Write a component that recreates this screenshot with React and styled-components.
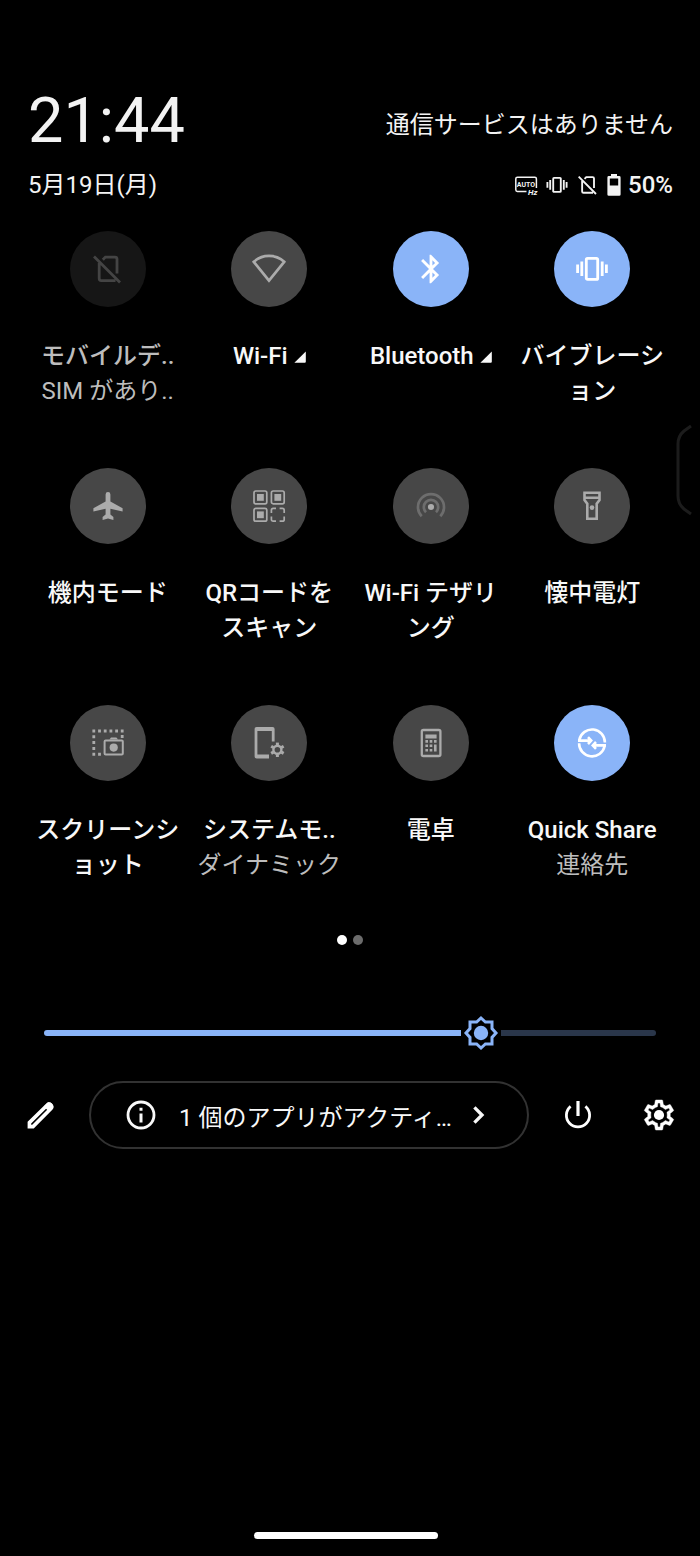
import React, {useState} from "react";

import styled, {createGlobalStyle} from 'styled-components';

import {MdBluetooth} from "react-icons/md";

const GlobalStyle = createGlobalStyle`
    * {
        box-sizing: border-box;
    }
    body {
        margin: 0;
        background: #000;
        color: #f3f3f3;
        font-family: Roboto, "Noto Sans CJK JP", sans-serif;
        font-size: 24px;
    }
    button {
        border: 0;
        padding: 0;
        background: none;
        color: inherit;
        font: inherit;
        cursor: pointer;
    }
    svg {
        display: block;
        flex-shrink: 0;
    }
`

const Page = styled.div`
    position: relative;
    display: flex;
    flex-direction: column;
    min-height: 100vh;
    padding-top: 89px;
`

const Header = styled.header`
    display: flex;
    flex-direction: column;
    gap: 16px;
    padding: 0 27px 0 28px;
`

const HeaderRow = styled.div`
    display: flex;
    justify-content: space-between;
    align-items: flex-end;
    line-height: 32px;
`

const Clock = styled.time`
    font-size: 63px;
    line-height: 64px;
`

const Carrier = styled.span`
    line-height: 56px;
`

const Status = styled.div`
    display: flex;
    align-items: center;
    gap: 7px;
    font-weight: 500;
`

const Tiles = styled.main`
    display: grid;
    grid-template-columns: repeat(4, 1fr);
    grid-auto-rows: minmax(178px, auto);
    row-gap: 59px;
    margin-top: 30px;
    padding: 0 27px;
`

const TileButton = styled.button`
    display: flex;
    flex-direction: column;
    align-items: center;
    justify-content: flex-start;
    gap: 32px;
    color: ${(props) => props.$state === "disabled" ? "#bdbdbd" : "#f8f8f8"};
`

const tileColors = {
    on: ["#8ab4f8", "#fff"],
    off: ["#474747", "#ababab"],
    disabled: ["#161616", "#444"],
}

const Circle = styled.span`
    display: flex;
    align-items: center;
    justify-content: center;
    width: 76px;
    height: 76px;
    border-radius: 50%;
    background: ${(props) => tileColors[props.$state][0]};
    color: ${(props) => tileColors[props.$state][1]};
`

const TileText = styled.span`
    display: flex;
    flex-direction: column;
    align-items: center;
    width: 148px;
    line-height: 35px;
`

const TileName = styled.span`
    display: flex;
    align-items: center;
    gap: 6px;
    font-weight: 500;
    line-break: anywhere;
`

const TileDetail = styled.span`
    color: #bdbdbd;
    white-space: nowrap;
`

const Dots = styled.nav`
    display: flex;
    justify-content: center;
    gap: 6px;
    margin-top: 52px;
`

const Dot = styled.button`
    width: 10px;
    height: 10px;
    border-radius: 50%;
    background: ${(props) => props.$current ? "#fff" : "#6c6c6c"};
`

const thumb = `<svg xmlns='http://www.w3.org/2000/svg' viewBox='-20 -20 40 40'><path d='M0-15L4.4-11H11V-4.4L15 0 11 4.4V11H4.4L0 15-4.4 11H-11V4.4L-15 0-11-4.4V-11H-4.4Z' fill='none' stroke='#8ab4f8' stroke-width='3'/><circle r='7.2' fill='#8ab4f8'/></svg>`

const SliderWrap = styled.div`
    display: flex;
    margin-top: 68px;
    padding: 0 44px;
`

const Slider = styled.input`
    appearance: none;
    width: 100%;
    height: 40px;
    margin: 0;
    background: none;

    &::-webkit-slider-runnable-track {
        height: 6px;
        border-radius: 3px;
        background: linear-gradient(to right, #8ab4f8 var(--level), #2a364a var(--level));
    }
    &::-webkit-slider-thumb {
        appearance: none;
        width: 40px;
        height: 40px;
        margin-top: -17px;
        background: #000 url("data:image/svg+xml,${encodeURIComponent(thumb).replace(/'/g, "%27")}") center / 40px no-repeat;
    }
`

const Actions = styled.div`
    display: flex;
    align-items: center;
    gap: 33px;
    margin-top: 28px;
    padding: 0 25px 0 24px;
    color: #fff;
`

const IconButton = styled.button`
    display: flex;
    align-items: center;
    justify-content: center;
    width: 32px;
    height: 40px;
`

const ActionGroup = styled.div`
    display: flex;
    gap: 49px;
`

const ActiveApps = styled.button`
    display: flex;
    flex: 1;
    align-items: center;
    min-width: 0;
    height: 68px;
    padding: 0 30px 0 32px;
    border: 2px solid #323232;
    border-radius: 34px;
    color: #f8f8f8;
`

const ActiveText = styled.span`
    flex: 1;
    min-width: 0;
    margin-left: 20px;
    overflow: hidden;
    text-align: left;
    text-overflow: ellipsis;
    white-space: nowrap;
`

const EdgeHandle = styled.svg`
    position: absolute;
    top: 424px;
    right: 8px;
`

const Footer = styled.footer`
    display: flex;
    justify-content: center;
    margin-top: auto;
    padding: 32px 8px 17px 0;
`

const HomeBar = styled.button`
    width: 184px;
    height: 7px;
    border-radius: 4px;
    background: #fff;
`

// every icon is drawn around 0,0 on a 36 unit canvas
const Icon = ({size = 36, children, ...rest}) => (
    <svg width={size} height={size} viewBox="-18 -18 36 36" fill="none" stroke="currentColor"
         strokeWidth="2.4" aria-hidden="true" {...rest}>
        {children}
    </svg>
)

const NoSimIcon = (props) => (
    <Icon strokeWidth="2.8" {...props}>
        <path d="M-14-12.5L12 13.5M-8.8-6V9.6Q-8.8 11.6-6.8 11.6H7.5M-5.2-9.2L-2.6-11.9H7Q9-11.9 9-9.9V4.6"/>
    </Icon>
)

const WifiIcon = () => (
    <Icon>
        <path d="M0 11.6L-15.2-7.2A22.6 22.6 0 0 1 15.2-7.2Z" strokeWidth="2.7"/>
    </Icon>
)

const VibrateIcon = (props) => (
    <Icon {...props}>
        <rect x="-5.7" y="-10.6" width="11.4" height="21" rx="1.2" strokeWidth="2.8"/>
        <path d="M-10.2-7.6V7M10.2-7.6V7M-14.4-4.4V4M14.4-4.4V4" strokeWidth="2.8"/>
    </Icon>
)

const PlaneIcon = () => (
    <Icon>
        <path stroke="none" fill="currentColor"
              d="M-2.4-11.6a2.4 2.4 0 0 1 4.8 0V-4.6L14.6 2.2V5.4L2.4 2.8V8.4L5.4 11V13.9L0 12.6-5.4 13.9V11L-2.4 8.4V2.8L-14.6 5.4V2.2L-2.4-4.6Z"/>
    </Icon>
)

const QrIcon = () => (
    <Icon strokeWidth="1.7">
        {[[-15, -15], [2.4, -15], [-15, 2.4]].map(([x, y]) => (
            <g key={`${x} ${y}`}>
                <rect x={x} y={y} width="12.8" height="12.8" rx="1.8"/>
                <rect x={x + 3} y={y + 3} width="6.8" height="6.8" fill="currentColor" stroke="none"/>
            </g>
        ))}
        <path d="M2.4 7V4.2Q2.4 2.4 4.2 2.4H7M10.6 2.4H13.4Q15.2 2.4 15.2 4.2V7M15.2 10.6V13.4Q15.2 15.2 13.4 15.2H10.6M7 15.2H4.2Q2.4 15.2 2.4 13.4V10.6"/>
    </Icon>
)

const HotspotIcon = () => (
    <Icon>
        <g stroke="#6d6d6d" strokeWidth="2.7">
            <path d="M-9.3 10.2A13 13 0 1 1 9.3 10.2"/>
            <path d="M-5 6.2A7.2 7.2 0 1 1 5 6.2"/>
        </g>
        <circle cy="1" r="3.1" fill="currentColor" stroke="none"/>
    </Icon>
)

const TorchIcon = () => (
    <Icon strokeWidth="2.6">
        <path d="M-7.5-13.3H7.5V-6L4.7-2.2V12.7H-4.7V-2.2L-7.5-6ZM-7.5-8.3H7.5"/>
        <circle cy="1.6" r="2.3" fill="currentColor" stroke="none"/>
    </Icon>
)

const ScreenshotIcon = () => (
    <Icon>
        <path strokeWidth="3" d="M-15.6-11.9H-12.8M-9.9-11.9H-7.1M-4.2-11.9H-1.4M1.5-11.9H4.3M7.2-11.9H10M12.8-11.9H15.6M12.8-6.6H15.6M-15.6-6.2H-12.8M-15.6-.4H-12.8M-15.6 5.4H-12.8M-15.6 11.2H-12.8M-9.9 11.2H-7.1"/>
        <rect x="-3.4" y="-2.6" width="18.2" height="14.2" rx="1" strokeWidth="2"/>
        <path d="M1.4-3.4L3-5.4H8.4L10-3.4Z" fill="currentColor" stroke="none"/>
        <circle cx="5.7" cy="4.6" r="4.1" fill="currentColor" stroke="none"/>
    </Icon>
)

const SystemIcon = () => (
    <Icon>
        <path stroke="none" fill="currentColor"
              d="M5.6-1.6V-14Q5.6-16 3.6-16H-12.4Q-14.4-16-14.4-14V13.4Q-14.4 15.4-12.4 15.4H0V11.4H-11.6V-12H2.8V-1.6Z"/>
        <g transform="translate(8.4 6.8)">
            <circle r="4" strokeWidth="2.4"/>
            {[0, 60, 120, 180, 240, 300].map((deg) => (
                <path key={deg} d="M0-4.6V-7.2" strokeWidth="3" transform={`rotate(${deg})`}/>
            ))}
        </g>
    </Icon>
)

const CalculatorIcon = () => (
    <Icon>
        <rect x="-9.2" y="-13" width="18.6" height="26" rx="1.6" strokeWidth="2.3"/>
        <path stroke="none" fill="currentColor"
              d="M-5.6-8.6H5.6V-4.6H-5.6ZM-5.6-2.9h2.6v2.6h-2.6zM-1.3-2.9h2.6v2.6h-2.6zM3-2.9h2.6v2.6H3zM-5.6 1.5h2.6v2.6h-2.6zM-1.3 1.5h2.6v2.6h-2.6zM-5.6 5.9h2.6v2.6h-2.6zM-1.3 5.9h2.6v2.6h-2.6zM3 1.5h2.6v7H3z"/>
    </Icon>
)

const QuickShareIcon = () => (
    <Icon strokeWidth="2.6">
        <path d="M-12.6-3.4A12.9 12.9 0 0 1 12.9-.4M-14-2.4H-2M-4-5.8L-.8-2.4-4 1"/>
        <path d="M12.6 3.2A12.9 12.9 0 0 1-12.9.2M14 2.4H2M4 5.8L.8 2.4 4-1"/>
    </Icon>
)

const BatteryIcon = () => (
    <svg width="14" height="22" viewBox="0 0 14 22" fill="currentColor" aria-hidden="true">
        <path fillRule="evenodd" d="M4 0H10V2H12.2Q13.6 2 13.6 3.4V20.4Q13.6 21.8 12.2 21.8H1.8Q.4 21.8.4 20.4V3.4Q.4 2 1.8 2H4ZM2.8 4.4V11.4H11.2V4.4Z"/>
    </svg>
)

const AutoHzIcon = () => (
    <svg width="24" height="24" viewBox="0 0 24 24" fill="currentColor" fontFamily="Roboto, sans-serif"
         fontWeight="700" aria-hidden="true">
        <path d="M12.5 18.4H3.4Q1.8 18.4 1.8 16.8V5.8Q1.8 4.2 3.4 4.2H20.8Q22.4 4.2 22.4 5.8V15" fill="none" stroke="currentColor" strokeWidth="1.5"/>
        <text x="12" y="14" fontSize="7" textAnchor="middle">AUTO</text>
        <text x="14" y="22" fontSize="8" fontStyle="italic">Hz</text>
    </svg>
)

const PencilIcon = () => (
    <Icon>
        <path d="M-10.6 11.6V7.6L7.3-10Q9-11.8 10.8-10 12.6-8.2 11-6.4L-7 11.6Z" strokeWidth="3.6"/>
        <path d="M5.5-8.5L9.2-4.8 12-8Q12-11 8.6-11.5Z" fill="currentColor"/>
    </Icon>
)

const InfoIcon = () => (
    <Icon>
        <circle r="13" strokeWidth="2.8"/>
        <path d="M0-7.3V-4.3M0-1.6V7.6" strokeWidth="3"/>
    </Icon>
)

const ChevronIcon = () => (
    <Icon>
        <path d="M-4.6-7.6L3 0-4.6 7.6" strokeWidth="3.3"/>
    </Icon>
)

const PowerIcon = () => (
    <Icon>
        <path d="M0-14V1" strokeWidth="3.2"/>
        <path d="M-7.4-8.6A11.6 11.6 0 1 0 7.4-8.6" strokeWidth="2.8"/>
    </Icon>
)

const GearIcon = () => (
    <svg width="36" height="36" viewBox="0 0 24 24" fill="currentColor" aria-hidden="true">
        <path stroke="currentColor" strokeWidth=".3" d="M19.43 12.98c.04-.32.07-.64.07-.98 0-.34-.03-.66-.07-.98l2.11-1.65c.19-.15.24-.42.12-.64l-2-3.46c-.09-.16-.26-.25-.44-.25-.06 0-.12.01-.17.03l-2.49 1c-.52-.4-1.08-.73-1.69-.98l-.38-2.65C14.46 2.18 14.25 2 14 2h-4c-.25 0-.46.18-.49.42l-.38 2.65c-.61.25-1.17.59-1.69.98l-2.49-1c-.06-.02-.12-.03-.18-.03-.17 0-.34.09-.43.25l-2 3.46c-.13.22-.07.49.12.64l2.11 1.65c-.04.32-.07.65-.07.98 0 .33.03.66.07.98l-2.11 1.65c-.19.15-.24.42-.12.64l2 3.46c.09.16.26.25.44.25.06 0 .12-.01.17-.03l2.49-1c.52.4 1.08.73 1.69.98l.38 2.65c.03.24.24.42.49.42h4c.25 0 .46-.18.49-.42l.38-2.65c.61-.25 1.17-.59 1.69-.98l2.49 1c.06.02.12.03.18.03.17 0 .34-.09.43-.25l2-3.46c.12-.22.07-.49-.12-.64l-2.11-1.65zm-1.98-1.71c.04.31.05.52.05.73 0 .21-.02.43-.05.73l-.14 1.13.89.7 1.08.84-.7 1.21-1.27-.51-1.04-.42-.9.68c-.43.32-.84.56-1.25.73l-1.06.43-.16 1.13-.2 1.35h-1.4l-.19-1.35-.16-1.13-1.06-.43c-.43-.18-.83-.41-1.23-.71l-.91-.7-1.06.43-1.27.51-.7-1.21 1.08-.84.89-.7-.14-1.13c-.03-.31-.05-.54-.05-.74s.02-.43.05-.73l.14-1.13-.89-.7-1.08-.84.7-1.21 1.27.51 1.04.42.9-.68c.43-.32.84-.56 1.25-.73l1.06-.43.16-1.13.2-1.35h1.39l.19 1.35.16 1.13 1.06.43c.43.18.83.41 1.23.71l.91.7 1.06-.43 1.27-.51.7 1.21-1.07.85-.89.7.14 1.13z"/>
        <circle cx="12" cy="12" r="3.4"/>
    </svg>
)

const Corner = () => (
    <svg width="12" height="12" viewBox="0 0 12 12" fill="currentColor" aria-hidden="true">
        <path d="M11.8.4V10.8Q11.8 11.8 10.8 11.8H.4Z"/>
    </svg>
)

const tiles = [
    {name: "モバイルデ..", detail: "SIM があり..", state: "disabled", icon: <NoSimIcon/>},
    {name: "Wi-Fi", state: "off", menu: true, icon: <WifiIcon/>},
    {name: "Bluetooth", state: "on", menu: true, icon: <MdBluetooth size={34}/>},
    {name: "バイブレーション", state: "on", icon: <VibrateIcon/>},
    {name: "機内モード", state: "off", icon: <PlaneIcon/>},
    {name: "QRコードをスキャン", state: "off", icon: <QrIcon/>},
    {name: "Wi-Fi テザリング", state: "off", icon: <HotspotIcon/>},
    {name: "懐中電灯", state: "off", icon: <TorchIcon/>},
    {name: "スクリーンショット", state: "off", icon: <ScreenshotIcon/>},
    {name: "システムモ..", detail: "ダイナミック", state: "off", icon: <SystemIcon/>},
    {name: "電卓", state: "off", icon: <CalculatorIcon/>},
    {name: "Quick Share", detail: "連絡先", state: "on", icon: <QuickShareIcon/>},
]

const Tile = props => (
    <TileButton type="button" $state={props.state}>
        <Circle $state={props.state}>{props.icon}</Circle>
        <TileText>
            <TileName>{props.name}{props.menu && <Corner/>}</TileName>
            {props.detail && <TileDetail>{props.detail}</TileDetail>}
        </TileText>
    </TileButton>
)

const App = () => {
    const [level, setLevel] = useState(186);

    return (
        <Page lang="ja">
            <GlobalStyle/>
            <Header>
                <HeaderRow>
                    <Clock>21:44</Clock>
                    <Carrier>通信サービスはありません</Carrier>
                </HeaderRow>
                <HeaderRow>
                    <span>5月19日(月)</span>
                    <Status>
                        <AutoHzIcon/>
                        <VibrateIcon size={24}/>
                        <NoSimIcon size={24}/>
                        <BatteryIcon/>
                        <span>50%</span>
                    </Status>
                </HeaderRow>
            </Header>

            <Tiles>
                {tiles.map((tile) => (
                    <Tile key={tile.name} {...tile}/>
                ))}
            </Tiles>

            <Dots aria-label="ページ">
                <Dot type="button" $current aria-label="1"/>
                <Dot type="button" aria-label="2"/>
            </Dots>

            <SliderWrap>
                <Slider type="range" min="0" max="255" value={level} aria-label="画面の明るさ"
                        onChange={(e) => setLevel(Number(e.target.value))}
                        style={{"--level": `${level / 255 * 100}%`}}/>
            </SliderWrap>

            <Actions>
                <IconButton type="button" aria-label="編集"><PencilIcon/></IconButton>
                <ActiveApps type="button">
                    <InfoIcon/>
                    <ActiveText>1 個のアプリがアクティ…</ActiveText>
                    <ChevronIcon/>
                </ActiveApps>
                <ActionGroup>
                    <IconButton type="button" aria-label="電源"><PowerIcon/></IconButton>
                    <IconButton type="button" aria-label="設定"><GearIcon/></IconButton>
                </ActionGroup>
            </Actions>

            <EdgeHandle width="16" height="92" viewBox="0 0 16 92" fill="none" stroke="#1c1c1c" strokeWidth="3" aria-hidden="true">
                <path d="M15 2L8 7Q2 12 2 20V72Q2 80 8 85L15 90"/>
            </EdgeHandle>

            <Footer>
                <HomeBar type="button" aria-label="ホーム"/>
            </Footer>
        </Page>
    )
};

export default App;
